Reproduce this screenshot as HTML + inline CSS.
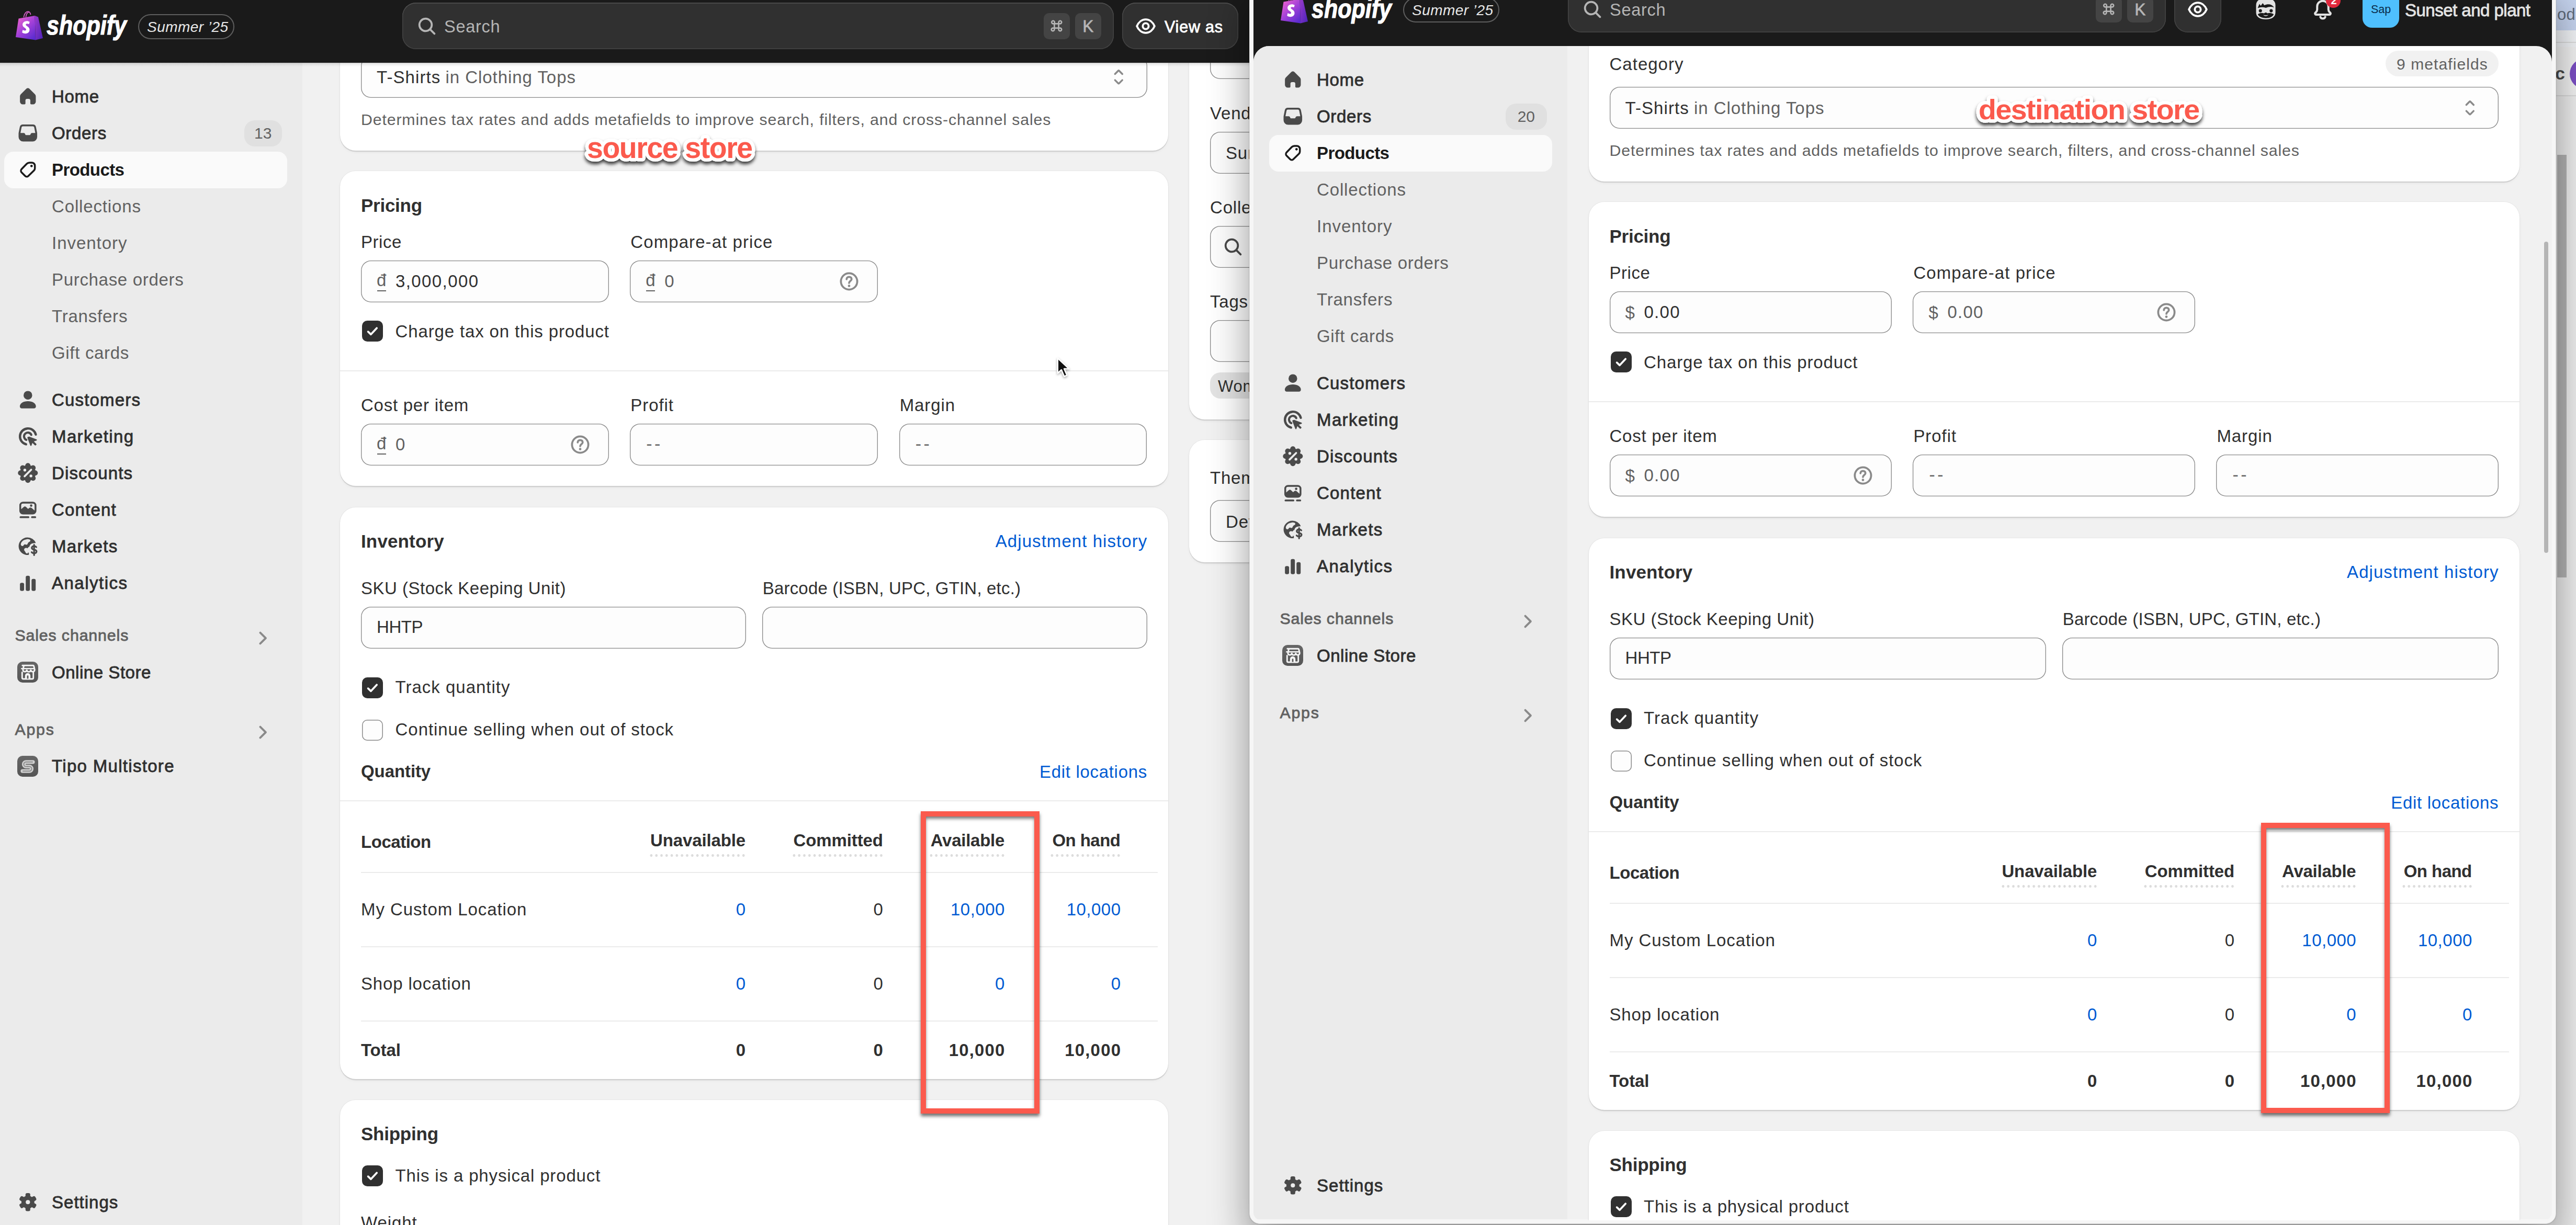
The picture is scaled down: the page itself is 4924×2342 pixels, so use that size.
<!DOCTYPE html><html><head><meta charset="utf-8"><title>Shopify admin</title><style>
*{margin:0;padding:0;box-sizing:content-box}
html,body{width:4924px;height:2342px;overflow:hidden;background:#f1f1f1}
body{font-family:"Liberation Sans",sans-serif;position:relative}
#root{position:absolute;left:0;top:0;width:4924px;height:2342px;overflow:hidden}
#root div,#root span,#root svg{position:absolute}
.t{white-space:pre}
.card{background:#fff;border-radius:30px;box-shadow:0 2.5px 0 0 rgba(0,0,0,.09),0 0 0 1px rgba(0,0,0,.04),0 3px 6px rgba(0,0,0,.04)}
.fld{background:#fdfdfd;box-shadow:inset 0 0 0 1.35px #8a8a8a;border-radius:19px}
.cb{width:40px;height:40px;border-radius:10px;box-sizing:border-box;box-shadow:inset 0 0 0 1.5px #8a8a8a;background:#fdfdfd}
.cb.on{background:#303030;box-shadow:none}
.cb svg{left:0;top:0}
.srch{background:#303030;border-radius:26px;box-shadow:inset 0 1.5px 0 #505050,inset 0 0 0 1.5px #444}
.dots{height:5px;background-image:radial-gradient(circle,#dcdcdc 2.2px,transparent 2.7px);background-size:9.8px 5px;background-repeat:repeat-x}
.appic{width:40px;height:40px;border-radius:10px;background:linear-gradient(180deg,#666,#555);overflow:hidden}
.appic svg{left:0;top:0}
</style></head><body><div id="root"><div style="left:0.0px;top:0.0px;width:2400.0px;height:2342.0px;background:#f1f1f1;"></div>
<div class="card" style="left:650.0px;top:-200.0px;width:1583.0px;height:488.0px;"></div>
<div class="fld" style="left:690.0px;top:107.0px;width:1502.5px;height:79.8px;"></div>
<span class="t" style="top:131.0px;font-size:33px;line-height:33px;color:#303030;letter-spacing:1.09px;left:720.0px;">T-Shirts</span>
<span class="t" style="top:131.0px;font-size:33px;line-height:33px;color:#616161;letter-spacing:0.95px;left:851.5px;">in Clothing Tops</span>
<svg class="ic" viewBox="0 0 20 20" width="46.6" height="46.6" style="left:2114.7px;top:124.2px;color:#8a8a8a;" fill="#8a8a8a"><path d="M10.884 4.323a1.250 1.250 0 0 0-1.768 0l-2.646 2.647a.75.75 0 0 0 1.060 1.060l2.470-2.470 2.470 2.470a.75.75 0 1 0 1.060-1.060l-2.646-2.647Z"/><path d="m13.530 13.030-2.646 2.647a1.250 1.250 0 0 1-1.768 0l-2.646-2.647a.75.75 0 0 1 1.060-1.060l2.470 2.470 2.470-2.470a.75.75 0 0 1 1.060 1.060Z"/></svg>
<span class="t" style="top:214.1px;font-size:30.3px;line-height:30.3px;color:#616161;letter-spacing:0.85px;left:690.0px;">Determines tax rates and adds metafields to improve search, filters, and cross-channel sales</span>
<div class="card" style="left:650.0px;top:327.0px;width:1583.0px;height:602.0px;"></div>
<span class="t" style="top:374.5px;font-size:35px;line-height:35px;color:#303030;font-weight:700;letter-spacing:-0.27px;left:690.0px;">Pricing</span>
<span class="t" style="top:445.8px;font-size:33px;line-height:33px;color:#303030;letter-spacing:0.55px;left:690.0px;">Price</span>
<div class="fld" style="left:690.0px;top:498.0px;width:473.8px;height:79.8px;"></div>
<span class="t" style="top:445.8px;font-size:33px;line-height:33px;color:#303030;letter-spacing:1.08px;left:1205.3px;">Compare-at price</span>
<div class="fld" style="left:1204.3px;top:498.0px;width:473.8px;height:79.8px;"></div>
<span class="t" style="top:519.3px;font-size:33px;line-height:33px;color:#616161;letter-spacing:0.80px;left:720.0px;">đ</span>
<div style="left:720.5px;top:554.5px;width:17.0px;height:2.5px;background:#616161;"></div>
<span class="t" style="top:520.8px;font-size:33px;line-height:33px;color:#303030;letter-spacing:1.40px;left:756.0px;">3,000,000</span>
<span class="t" style="top:519.3px;font-size:33px;line-height:33px;color:#616161;letter-spacing:0.80px;left:1234.3px;">đ</span>
<div style="left:1234.8px;top:554.5px;width:17.0px;height:2.5px;background:#616161;"></div>
<span class="t" style="top:520.8px;font-size:33px;line-height:33px;color:#616161;letter-spacing:0.80px;left:1270.3px;">0</span>
<svg class="ic" viewBox="0 0 20 20" width="50" height="50" style="left:1598.2px;top:513.0px;color:#8a8a8a;" fill="#8a8a8a"><circle cx="10" cy="10" r="6.250" fill="none" stroke="currentColor" stroke-width="1.500"/><path fill="none" stroke="currentColor" stroke-width="1.500" stroke-linecap="round" d="M8.100 8.300c0-1.000.800-1.800 1.900-1.800s1.900.750 1.900 1.750c0 1.400-1.900 1.500-1.900 2.900"/><circle cx="10" cy="13.400" r=".950"/></svg>
<div class="cb on" style="left:692.0px;top:613.0px"><svg viewBox="0 0 40 40" width="40" height="40"><path d="M11.6 21.1l5.4 5.2L28.2 14.3" fill="none" stroke="#fff" stroke-width="3.7" stroke-linecap="round" stroke-linejoin="round"/></svg></div>
<span class="t" style="top:617.1px;font-size:33px;line-height:33px;color:#303030;letter-spacing:0.85px;left:755.6px;">Charge tax on this product</span>
<div style="left:650.0px;top:707.5px;width:1583.0px;height:2.5px;background:#ebebeb;"></div>
<span class="t" style="top:757.8px;font-size:33px;line-height:33px;color:#303030;letter-spacing:0.75px;left:690.0px;">Cost per item</span>
<div class="fld" style="left:690.0px;top:810.0px;width:473.8px;height:79.8px;"></div>
<span class="t" style="top:831.3px;font-size:33px;line-height:33px;color:#616161;letter-spacing:0.80px;left:720.0px;">đ</span>
<div style="left:720.5px;top:866.5px;width:17.0px;height:2.5px;background:#616161;"></div>
<span class="t" style="top:832.8px;font-size:33px;line-height:33px;color:#616161;letter-spacing:0.80px;left:756.0px;">0</span>
<svg class="ic" viewBox="0 0 20 20" width="50" height="50" style="left:1083.8px;top:825.0px;color:#8a8a8a;" fill="#8a8a8a"><circle cx="10" cy="10" r="6.250" fill="none" stroke="currentColor" stroke-width="1.500"/><path fill="none" stroke="currentColor" stroke-width="1.500" stroke-linecap="round" d="M8.100 8.300c0-1.000.800-1.800 1.900-1.800s1.900.750 1.900 1.750c0 1.400-1.900 1.500-1.900 2.900"/><circle cx="10" cy="13.400" r=".950"/></svg>
<span class="t" style="top:757.8px;font-size:33px;line-height:33px;color:#303030;letter-spacing:0.93px;left:1205.3px;">Profit</span>
<div class="fld" style="left:1204.3px;top:810.0px;width:473.8px;height:79.8px;"></div>
<span class="t" style="top:830.8px;font-size:34px;line-height:34px;color:#616161;letter-spacing:4.50px;left:1235.3px;">--</span>
<span class="t" style="top:757.8px;font-size:33px;line-height:33px;color:#303030;letter-spacing:0.91px;left:1719.7px;">Margin</span>
<div class="fld" style="left:1718.7px;top:810.0px;width:473.8px;height:79.8px;"></div>
<span class="t" style="top:830.8px;font-size:34px;line-height:34px;color:#616161;letter-spacing:4.50px;left:1749.7px;">--</span>
<div class="card" style="left:650.0px;top:969.7px;width:1583.0px;height:1093.1px;"></div>
<span class="t" style="top:1016.9px;font-size:35px;line-height:35px;color:#303030;font-weight:700;letter-spacing:0.14px;left:690.0px;">Inventory</span>
<span class="t" style="top:1017.8px;font-size:33px;line-height:33px;color:#005bd3;letter-spacing:1.06px;right:2730.7px;">Adjustment history</span>
<span class="t" style="top:1108.2px;font-size:33px;line-height:33px;color:#303030;letter-spacing:0.51px;left:690.0px;">SKU (Stock Keeping Unit)</span>
<div class="fld" style="left:690.0px;top:1160.0px;width:735.8px;height:79.8px;"></div>
<span class="t" style="top:1181.8px;font-size:33px;line-height:33px;color:#303030;letter-spacing:-0.45px;left:720.0px;">HHTP</span>
<span class="t" style="top:1107.9px;font-size:33px;line-height:33px;color:#303030;letter-spacing:0.18px;left:1457.8px;">Barcode (ISBN, UPC, GTIN, etc.)</span>
<div class="fld" style="left:1456.8px;top:1160.0px;width:735.8px;height:79.8px;"></div>
<div class="cb on" style="left:692.0px;top:1295.0px"><svg viewBox="0 0 40 40" width="40" height="40"><path d="M11.6 21.1l5.4 5.2L28.2 14.3" fill="none" stroke="#fff" stroke-width="3.7" stroke-linecap="round" stroke-linejoin="round"/></svg></div>
<span class="t" style="top:1297.3px;font-size:33px;line-height:33px;color:#303030;letter-spacing:0.99px;left:755.6px;">Track quantity</span>
<div class="cb" style="left:692.0px;top:1375.5px"></div>
<span class="t" style="top:1377.6px;font-size:33px;line-height:33px;color:#303030;letter-spacing:0.93px;left:755.6px;">Continue selling when out of stock</span>
<span class="t" style="top:1457.6px;font-size:33px;line-height:33px;color:#303030;font-weight:700;letter-spacing:-0.09px;left:690.0px;">Quantity</span>
<span class="t" style="top:1458.5px;font-size:33px;line-height:33px;color:#005bd3;letter-spacing:0.69px;right:2731.1px;">Edit locations</span>
<div style="left:650.0px;top:1529.5px;width:1583.0px;height:2.5px;background:#ebebeb;"></div>
<span class="t" style="top:1592.5px;font-size:33px;line-height:33px;color:#303030;font-weight:700;letter-spacing:-0.47px;left:690.0px;">Location</span>
<span class="t" style="top:1590.1px;font-size:33px;line-height:33px;color:#303030;font-weight:700;letter-spacing:-0.14px;right:3499.0px;">Unavailable</span>
<div class="dots" style="left:1240.4px;top:1632.5px;width:186.2px"></div>
<span class="t" style="top:1590.1px;font-size:33px;line-height:33px;color:#303030;font-weight:700;letter-spacing:-0.12px;right:3236.2px;">Committed</span>
<div class="dots" style="left:1513.0px;top:1632.5px;width:176.4px"></div>
<span class="t" style="top:1590.1px;font-size:33px;line-height:33px;color:#303030;font-weight:700;letter-spacing:-0.26px;right:3003.9px;">Available</span>
<div class="dots" style="left:1774.9px;top:1632.5px;width:147.0px"></div>
<span class="t" style="top:1590.1px;font-size:33px;line-height:33px;color:#303030;font-weight:700;letter-spacing:-0.55px;right:2782.6px;">On hand</span>
<div class="dots" style="left:2006.3px;top:1632.5px;width:137.2px"></div>
<div style="left:690.0px;top:1666.5px;width:1522.7px;height:2.5px;background:#ebebeb;"></div>
<div style="left:690.0px;top:1808.5px;width:1522.7px;height:2.5px;background:#ebebeb;"></div>
<div style="left:690.0px;top:1950.5px;width:1522.7px;height:2.5px;background:#ebebeb;"></div>
<span class="t" style="top:1721.6px;font-size:33px;line-height:33px;color:#303030;letter-spacing:0.92px;left:690.0px;">My Custom Location</span>
<span class="t" style="top:1721.8px;font-size:33px;line-height:33px;color:#005bd3;letter-spacing:0.80px;right:3498.1px;">0</span>
<span class="t" style="top:1721.8px;font-size:33px;line-height:33px;color:#303030;letter-spacing:0.80px;right:3235.3px;">0</span>
<span class="t" style="top:1721.8px;font-size:33px;line-height:33px;color:#005bd3;letter-spacing:0.49px;right:3003.1px;">10,000</span>
<span class="t" style="top:1721.8px;font-size:33px;line-height:33px;color:#005bd3;letter-spacing:0.49px;right:2781.5px;">10,000</span>
<span class="t" style="top:1864.2px;font-size:33px;line-height:33px;color:#303030;letter-spacing:0.83px;left:690.0px;">Shop location</span>
<span class="t" style="top:1864.4px;font-size:33px;line-height:33px;color:#005bd3;letter-spacing:0.80px;right:3498.1px;">0</span>
<span class="t" style="top:1864.4px;font-size:33px;line-height:33px;color:#303030;letter-spacing:0.80px;right:3235.3px;">0</span>
<span class="t" style="top:1864.4px;font-size:33px;line-height:33px;color:#005bd3;letter-spacing:0.80px;right:3002.8px;">0</span>
<span class="t" style="top:1864.4px;font-size:33px;line-height:33px;color:#005bd3;letter-spacing:0.80px;right:2781.2px;">0</span>
<span class="t" style="top:1991.0px;font-size:33px;line-height:33px;color:#303030;font-weight:700;letter-spacing:-0.10px;left:690.0px;">Total</span>
<span class="t" style="top:1991.2px;font-size:33px;line-height:33px;color:#303030;font-weight:700;letter-spacing:-0.02px;right:3498.9px;">0</span>
<span class="t" style="top:1991.2px;font-size:33px;line-height:33px;color:#303030;font-weight:700;letter-spacing:-0.02px;right:3236.1px;">0</span>
<span class="t" style="top:1991.2px;font-size:33px;line-height:33px;color:#303030;font-weight:700;letter-spacing:1.17px;right:3002.4px;">10,000</span>
<span class="t" style="top:1991.2px;font-size:33px;line-height:33px;color:#303030;font-weight:700;letter-spacing:1.17px;right:2780.8px;">10,000</span>
<div class="card" style="left:650.0px;top:2103.0px;width:1583.0px;height:497.0px;"></div>
<span class="t" style="top:2150.3px;font-size:35px;line-height:35px;color:#303030;font-weight:700;letter-spacing:-0.24px;left:690.0px;">Shipping</span>
<div class="cb on" style="left:692.0px;top:2228.0px"><svg viewBox="0 0 40 40" width="40" height="40"><path d="M11.6 21.1l5.4 5.2L28.2 14.3" fill="none" stroke="#fff" stroke-width="3.7" stroke-linecap="round" stroke-linejoin="round"/></svg></div>
<span class="t" style="top:2231.2px;font-size:33px;line-height:33px;color:#303030;letter-spacing:0.85px;left:755.6px;">This is a physical product</span>
<span class="t" style="top:2321.4px;font-size:33px;line-height:33px;color:#303030;letter-spacing:0.93px;left:690.0px;">Weight</span>
<div class="card" style="left:2272.5px;top:-100.0px;width:427.5px;height:901.8px;"></div>
<div class="fld" style="left:2313.0px;top:71.0px;width:387.0px;height:79.8px;"></div>
<span class="t" style="top:200.3px;font-size:33px;line-height:33px;color:#303030;letter-spacing:0.80px;left:2313.0px;">Vendor</span>
<div class="fld" style="left:2313.0px;top:252.0px;width:387.0px;height:79.8px;"></div>
<span class="t" style="top:276.3px;font-size:33px;line-height:33px;color:#303030;letter-spacing:0.80px;left:2343.0px;">Sunset and plant</span>
<span class="t" style="top:380.0px;font-size:33px;line-height:33px;color:#303030;letter-spacing:0.80px;left:2313.0px;">Collections</span>
<div class="fld" style="left:2313.0px;top:432.0px;width:387.0px;height:79.8px;"></div>
<svg class="ic" viewBox="0 0 20 20" width="50" height="50" style="left:2332.0px;top:447.0px;color:#4a4a4a;" fill="#4a4a4a"><path fill-rule="evenodd" d="M12.323 13.383a5.500 5.500 0 1 1 1.060-1.060l2.897 2.897a.75.75 0 1 1-1.060 1.060l-2.897-2.897Zm.677-4.383a4 4 0 1 1-8 0 4 4 0 0 1 8 0Z"/></svg>
<span class="t" style="top:560.3px;font-size:33px;line-height:33px;color:#303030;letter-spacing:0.80px;left:2313.0px;">Tags</span>
<div class="fld" style="left:2313.0px;top:612.0px;width:387.0px;height:79.8px;"></div>
<div style="left:2313.0px;top:712.0px;width:387.0px;height:49.6px;background:#e3e3e3;border-radius:20px;"></div>
<span class="t" style="top:722.8px;font-size:31px;line-height:31px;color:#303030;letter-spacing:0.75px;left:2328.0px;">Women</span>
<div class="card" style="left:2272.5px;top:841.4px;width:427.5px;height:234.1px;"></div>
<span class="t" style="top:896.8px;font-size:33px;line-height:33px;color:#303030;letter-spacing:0.80px;left:2313.0px;">Theme template</span>
<div class="fld" style="left:2313.0px;top:956.0px;width:387.0px;height:79.8px;"></div>
<span class="t" style="top:980.8px;font-size:33px;line-height:33px;color:#303030;letter-spacing:0.80px;left:2343.0px;">Default product</span>
<div style="left:0.0px;top:120.0px;width:578.0px;height:2222.0px;background:#ebebeb;"></div>
<div style="left:8.0px;top:290.0px;width:541.0px;height:70.0px;background:#fafafa;border-radius:18px;"></div>
<svg class="ic" viewBox="0 0 20 20" width="46.6" height="46.6" style="left:29.7px;top:161.2px;color:#4a4a4a;" fill="#4a4a4a"><path d="M10 3.2c.5 0 .97.2 1.32.55l4.4 4.4c.5.5.78 1.17.78 1.87v4.23a2.25 2.25 0 0 1-2.25 2.25h-1.5a.75.75 0 0 1-.75-.75v-2.5c0-.69-.56-1.25-1.25-1.25h-1.5c-.69 0-1.25.56-1.25 1.25v2.5a.75.75 0 0 1-.75.75h-1.5a2.25 2.25 0 0 1-2.25-2.25v-4.23c0-.7.28-1.38.78-1.87l4.4-4.4c.35-.35.82-.55 1.32-.55Z"/></svg>
<span class="t" style="top:167.6px;font-size:33px;line-height:33px;color:#303030;-webkit-text-stroke:0.85px currentColor;letter-spacing:0.66px;left:99.0px;">Home</span>
<svg class="ic" viewBox="0 0 20 20" width="46.6" height="46.6" style="left:29.7px;top:231.2px;color:#4a4a4a;" fill="#4a4a4a"><path fill-rule="evenodd" d="M5.9 3h8.2a2.6 2.6 0 0 1 2.55 2.1l.9 4.6c.05.3.08.6.08.9v2.650a3.75 3.75 0 0 1-3.75 3.75h-7.760a3.75 3.75 0 0 1-3.75-3.75v-2.650c0-.3.030-.6.080-.9l.9-4.6a2.600 2.600 0 0 1 2.550-2.100Zm0 1.500a1.100 1.100 0 0 0-1.080.890l-.9 4.610h2.600c.620 0 1.160.420 1.300 1.030.1.4.450.670.860.670h2.640c.410 0 .770-.280.860-.670.140-.6.680-1.030 1.300-1.030h2.600l-.9-4.610a1.100 1.100 0 0 0-1.080-.890h-8.200Z"/></svg>
<span class="t" style="top:237.6px;font-size:33px;line-height:33px;color:#303030;-webkit-text-stroke:0.85px currentColor;letter-spacing:0.67px;left:99.0px;">Orders</span>
<svg class="ic" viewBox="0 0 20 20" width="46.6" height="46.6" style="left:29.7px;top:301.2px;color:#1a1a1a;" fill="#1a1a1a"><path d="M13 8a1 1 0 1 0 0-2 1 1 0 0 0 0 2Z"/><path fill-rule="evenodd" d="M11.276 3.5a3.75 3.75 0 0 0-2.701 1.149l-4.254 4.417a2.75 2.75 0 0 0 .036 3.852l2.898 2.898a2.5 2.5 0 0 0 3.502.033l4.747-4.571a3.25 3.25 0 0 0 .996-2.341v-2.187a3.25 3.25 0 0 0-3.25-3.25h-1.974Zm-1.62 2.19a2.25 2.25 0 0 1 1.62-.69h1.974c.966 0 1.75.784 1.75 1.75v2.187c0 .475-.194.93-.536 1.26l-4.747 4.572a1 1 0 0 1-1.401-.014l-2.898-2.898a1.250 1.250 0 0 1-.016-1.75l4.253-4.418Z"/></svg>
<span class="t" style="top:307.6px;font-size:33px;line-height:33px;color:#1a1a1a;font-weight:700;letter-spacing:-0.58px;left:99.0px;">Products</span>
<div style="left:466.7px;top:230.0px;width:72.0px;height:49.6px;background:#e0e0e0;border-radius:20px;"></div>
<span class="t" style="top:239.8px;font-size:30px;line-height:30px;color:#616161;left:486.0px;">13</span>
<span class="t" style="top:377.6px;font-size:33px;line-height:33px;color:#616161;letter-spacing:0.85px;left:99.0px;">Collections</span>
<span class="t" style="top:447.6px;font-size:33px;line-height:33px;color:#616161;letter-spacing:0.96px;left:99.0px;">Inventory</span>
<span class="t" style="top:517.6px;font-size:33px;line-height:33px;color:#616161;letter-spacing:0.68px;left:99.0px;">Purchase orders</span>
<span class="t" style="top:587.6px;font-size:33px;line-height:33px;color:#616161;letter-spacing:0.78px;left:99.0px;">Transfers</span>
<span class="t" style="top:657.6px;font-size:33px;line-height:33px;color:#616161;letter-spacing:0.68px;left:99.0px;">Gift cards</span>
<svg class="ic" viewBox="0 0 20 20" width="46.6" height="46.6" style="left:29.7px;top:741.2px;color:#4a4a4a;" fill="#4a4a4a"><circle cx="10" cy="6.300" r="3.550"/><path d="M3.400 15.500c0-2.600 2.900-4.300 6.600-4.300s6.600 1.700 6.600 4.300c0 .900-.700 1.600-1.600 1.600h-10c-.900 0-1.600-.700-1.600-1.600Z"/></svg>
<span class="t" style="top:747.6px;font-size:33px;line-height:33px;color:#303030;-webkit-text-stroke:0.85px currentColor;letter-spacing:1.17px;left:99.0px;">Customers</span>
<svg class="ic" viewBox="0 0 20 20" width="46.6" height="46.6" style="left:29.7px;top:811.2px;color:#4a4a4a;" fill="#4a4a4a"><path fill="none" stroke="currentColor" stroke-width="1.9" stroke-linecap="round" d="M16.5 8.5A6.6 6.6 0 1 0 8.5 16.500"/><path fill="none" stroke="currentColor" stroke-width="1.8" stroke-linecap="round" d="M12.8 8.700A3.100 3.100 0 1 0 8.700 12.800"/><path d="M10.9 10.1l6.2 2.35c.45.17.43.8-.02.950l-2.2.72 2.0 2.0a.6.6 0 0 1 0 .85l-.35.35a.6.6 0 0 1-.85 0l-2.0-2.0-.72 2.2c-.15.45-.78.470-.95.020l-2.350-6.2a.75.75 0 0 1 .97-.97Z"/></svg>
<span class="t" style="top:817.6px;font-size:33px;line-height:33px;color:#303030;-webkit-text-stroke:0.85px currentColor;letter-spacing:1.39px;left:99.0px;">Marketing</span>
<svg class="ic" viewBox="0 0 20 20" width="46.6" height="46.6" style="left:29.7px;top:881.2px;color:#4a4a4a;" fill="#4a4a4a"><circle cx="10" cy="10" r="6.500"/><circle cx="10.00" cy="4.00" r="2.150"/><circle cx="14.24" cy="5.76" r="2.150"/><circle cx="16.00" cy="10.00" r="2.150"/><circle cx="14.24" cy="14.24" r="2.150"/><circle cx="10.00" cy="16.00" r="2.150"/><circle cx="5.76" cy="14.24" r="2.150"/><circle cx="4.00" cy="10.00" r="2.150"/><circle cx="5.76" cy="5.76" r="2.150"/><path d="M7.300 12.700l5.400-5.400" stroke="#ebebeb" stroke-width="1.600" stroke-linecap="round"/><circle cx="7.500" cy="7.600" r="1.150" fill="#ebebeb"/><circle cx="12.500" cy="12.400" r="1.150" fill="#ebebeb"/></svg>
<span class="t" style="top:887.6px;font-size:33px;line-height:33px;color:#303030;-webkit-text-stroke:0.85px currentColor;letter-spacing:1.14px;left:99.0px;">Discounts</span>
<svg class="ic" viewBox="0 0 20 20" width="46.6" height="46.6" style="left:29.7px;top:951.2px;color:#4a4a4a;" fill="#4a4a4a"><path fill-rule="evenodd" d="M3 6.500a3 3 0 0 1 3-3h8a3 3 0 0 1 3 3v4.500a3 3 0 0 1-3 3h-8a3 3 0 0 1-3-3v-4.5Zm3-1.500a1.5 1.5 0 0 0-1.5 1.5v3.2l2.100-1.900a1.400 1.400 0 0 1 1.900 0l1.700 1.600 1.000-.8a1.400 1.400 0 0 1 1.800 0l2.500 2.100v-4.200a1.5 1.5 0 0 0-1.5-1.5h-8Zm6.700 2.700a1 1 0 1 0 0-2 1 1 0 0 0 0 2Z"/><rect x="3.200" y="15.400" width="8" height="1.600" rx=".8"/><rect x="12.600" y="15.400" width="4.200" height="1.600" rx=".8"/></svg>
<span class="t" style="top:957.6px;font-size:33px;line-height:33px;color:#303030;-webkit-text-stroke:0.85px currentColor;letter-spacing:1.20px;left:99.0px;">Content</span>
<svg class="ic" viewBox="0 0 20 20" width="46.6" height="46.6" style="left:29.7px;top:1021.2px;color:#4a4a4a;" fill="#4a4a4a"><path d="M9.600 2.800a7.200 7.200 0 1 0 1.200 14.300v-1.600a2.900 2.900 0 0 1 .5-5.200c.2-1.400 1.300-2.500 2.800-2.700l2.400-.300A7.200 7.200 0 0 0 9.600 2.800Z"/><path fill="#ebebeb" d="M9.100 4.300c1.100-.3 2.600.1 2.900.9.300.8-.8 1.200-1.500 1.700-.7.5-.5 1.500-1.300 1.800-.8.3-1.200-.400-1.900-.2-.7.2-.7 1.100-1.400 1.300-.7.2-1.600-.3-1.700-1.100-.1-.9.500-2.200 1.600-3.100 1.000-.800 2.200-1.100 3.300-1.300Z"/><path fill="#ebebeb" d="M8.300 11.400c.8-.2 1.700.2 2.000 1.000.3.800-.1 1.500-.1 2.300 0 .7-.2 1.300-.9 1.300s-1.100-.6-1.400-1.300c-.3-.700-1.100-1.100-1.000-1.900.1-.8.600-1.200 1.400-1.400Z"/><path fill="none" stroke="currentColor" stroke-width="1.400" stroke-linecap="round" d="M16.900 10.700c-.4-.5-1.000-.8-1.800-.8-1.100 0-1.900.600-1.900 1.500 0 2.000 3.900.9 3.900 2.900 0 .9-.8 1.500-2.000 1.500-.900 0-1.600-.3-2.000-.9M15.100 8.900v8.400"/></svg>
<span class="t" style="top:1027.6px;font-size:33px;line-height:33px;color:#303030;-webkit-text-stroke:0.85px currentColor;letter-spacing:1.32px;left:99.0px;">Markets</span>
<svg class="ic" viewBox="0 0 20 20" width="46.6" height="46.6" style="left:29.7px;top:1091.2px;color:#4a4a4a;" fill="#4a4a4a"><rect x="3.500" y="10" width="3.400" height="6.650" rx="1.300"/><rect x="8.250" y="4.150" width="3.400" height="12.500" rx="1.300"/><rect x="13.000" y="6.800" width="3.400" height="9.850" rx="1.300"/></svg>
<span class="t" style="top:1097.6px;font-size:33px;line-height:33px;color:#303030;-webkit-text-stroke:0.85px currentColor;letter-spacing:1.49px;left:99.0px;">Analytics</span>
<span class="t" style="top:1199.9px;font-size:30.3px;line-height:30.3px;color:#616161;-webkit-text-stroke:0.85px currentColor;letter-spacing:0.88px;left:28.4px;">Sales channels</span>
<svg class="ic" viewBox="0 0 20 20" width="52" height="52" style="left:475.5px;top:1194.0px;color:#8a8a8a;" fill="#8a8a8a"><path fill-rule="evenodd" d="M7.720 14.530a.75.75 0 0 1 0-1.060l3.470-3.470-3.470-3.470a.75.75 0 0 1 1.060-1.060l4 4a.75.75 0 0 1 0 1.060l-4 4a.75.75 0 0 1-1.060 0Z"/></svg>
<div class="appic" style="left:33.0px;top:1265.0px"><svg viewBox="0 0 40 40" width="40" height="40"><g fill="none" stroke="#f4f4f4" stroke-width="2.9" stroke-linejoin="round" stroke-linecap="round"><path d="M9.300 20.500v10.200a2.300 2.300 0 0 0 2.300 2.300h16.800a2.300 2.300 0 0 0 2.300-2.300v-10.200"/><path d="M9.800 7.300h20.400a1.500 1.500 0 0 1 1.450 1.100l1.650 6.900a3.800 3.800 0 0 1-7.500.900 3.800 3.800 0 0 1-7.500 0 3.800 3.800 0 0 1-7.500-.900l1.650-6.900a1.500 1.500 0 0 1 1.350-1.100Z"/><path d="M8.300 13.200h23.400" stroke-width="2.400"/><path d="M15.900 32.500v-5.500a4.100 4.100 0 0 1 8.200 0v5.500" fill="#f4f4f4" stroke-width="2.200"/><path d="M18.600 32.500v-4.800a1.400 1.400 0 0 1 2.800 0v4.800" fill="#5a5a5a" stroke="none"/></g></svg></div>
<span class="t" style="top:1268.6px;font-size:33px;line-height:33px;color:#303030;-webkit-text-stroke:0.85px currentColor;letter-spacing:0.54px;left:99.0px;">Online Store</span>
<span class="t" style="top:1379.9px;font-size:30.3px;line-height:30.3px;color:#616161;-webkit-text-stroke:0.85px currentColor;letter-spacing:1.78px;left:28.4px;">Apps</span>
<svg class="ic" viewBox="0 0 20 20" width="52" height="52" style="left:475.5px;top:1374.0px;color:#8a8a8a;" fill="#8a8a8a"><path fill-rule="evenodd" d="M7.720 14.530a.75.75 0 0 1 0-1.060l3.470-3.470-3.470-3.470a.75.75 0 0 1 1.060-1.060l4 4a.75.75 0 0 1 0 1.060l-4 4a.75.75 0 0 1-1.060 0Z"/></svg>
<div class="appic" style="left:33.0px;top:1444.5px"><svg viewBox="0 0 40 40" width="40" height="40"><g fill="none" stroke-linecap="round" stroke-linejoin="round"><path d="M30 11.800h-13.200a4.350 4.350 0 0 0 0 8.700h6.400a4.350 4.350 0 0 1 0 8.700h-13.200" stroke="#cfcfcf" stroke-width="7.200"/><path d="M29 11.800h-12.200a4.350 4.350 0 0 0 0 8.700h4" stroke="#8f8f8f" stroke-width="2.000"/><path d="M11 29.200h12.200a4.350 4.350 0 0 0 0-8.700h-4" stroke="#8f8f8f" stroke-width="2.000"/></g></svg></div>
<span class="t" style="top:1448.1px;font-size:33px;line-height:33px;color:#303030;-webkit-text-stroke:0.85px currentColor;letter-spacing:1.31px;left:99.0px;">Tipo Multistore</span>
<svg class="ic" viewBox="0 0 20 20" width="46.6" height="46.6" style="left:29.7px;top:2274.7px;color:#4a4a4a;" fill="#4a4a4a"><rect x="8.050" y="2.600" width="3.900" height="5" rx="1.300" transform="rotate(0 10 10)"/><rect x="8.050" y="2.600" width="3.900" height="5" rx="1.300" transform="rotate(60 10 10)"/><rect x="8.050" y="2.600" width="3.900" height="5" rx="1.300" transform="rotate(120 10 10)"/><rect x="8.050" y="2.600" width="3.900" height="5" rx="1.300" transform="rotate(180 10 10)"/><rect x="8.050" y="2.600" width="3.900" height="5" rx="1.300" transform="rotate(240 10 10)"/><rect x="8.050" y="2.600" width="3.900" height="5" rx="1.300" transform="rotate(300 10 10)"/><circle cx="10" cy="10" r="5.300"/><circle cx="10" cy="10" r="1.750" fill="#ebebeb"/></svg>
<span class="t" style="top:2281.6px;font-size:33px;line-height:33px;color:#303030;-webkit-text-stroke:0.85px currentColor;letter-spacing:1.01px;left:99.0px;">Settings</span>
<div style="left:0.0px;top:0.0px;width:2388.0px;height:120.0px;background:#1a1a1a;"></div>
<svg class="ic" viewBox="0 0 52 58" width="52" height="58" style="left:30.0px;top:20.0px"><defs><linearGradient id="bg1" x1="0.150" y1="0.100" x2="0.850" y2="1"><stop offset="0" stop-color="#e860cf"/><stop offset=".450" stop-color="#a541d8"/><stop offset="1" stop-color="#5a2bd0"/></linearGradient><linearGradient id="bg2" x1="0" y1="0" x2="1" y2="1"><stop offset="0" stop-color="#9a3ccb"/><stop offset="1" stop-color="#4b22b8"/></linearGradient></defs><path d="M15.500 12.500c.8-6 4.200-10.500 8-10.500 2.500 0 4.200 2.300 5 5.500M19.500 12c.7-4.500 2.700-8 5.200-8.800" fill="none" stroke="#e062d2" stroke-width="1.700" stroke-linecap="round"/><path d="M5.500 15.500l31-5.500 1.500 46.500-38 -5.500Z" fill="url(#bg1)"/><path d="M36.500 10l6.500 2.500 9 40.500-14 3.500Z" fill="url(#bg2)"/><path d="M26.800 21.800c-1.700-1.000-3.700-1.600-5.700-1.500-4.900.200-8.200 3.200-8 7.300.300 5.200 6.800 5.800 6.900 9 .050 1.100-.750 1.900-2.100 1.950-2.100.100-4.400-1.500-4.400-1.500l-1.300 4.900s2.400 2.300 6.500 2.200c4.800-.150 8-3.100 7.800-7.700-.300-5.800-7.100-6.500-7.200-9.200-.050-1.300 1.000-1.900 2.400-1.950 1.900-.050 3.700.800 3.700.800l1.400-4.300Z" fill="#fff"/></svg>
<svg class="ic" width="170" height="70" style="left:86.0px;top:18.0px;overflow:visible"><text x="3" y="48.3" font-family="Liberation Sans, sans-serif" font-weight="700" font-style="italic" font-size="52" textLength="153" lengthAdjust="spacingAndGlyphs" fill="#fff" stroke="#fff" stroke-width="1.2">shopify</text></svg>
<div style="left:264.0px;top:27.0px;width:184.0px;height:47.5px;border-radius:24px;border:2px solid #5e5e5e;box-sizing:border-box;"></div>
<span class="t" style="top:38.2px;font-size:28px;line-height:28px;color:#e8e8e8;font-style:italic;letter-spacing:0.45px;left:281.0px;">Summer ’25</span>
<div class="srch" style="left:769.0px;top:5.0px;width:1360.0px;height:89.0px;"></div>
<svg class="ic" viewBox="0 0 20 20" width="50" height="50" style="left:790.5px;top:25.0px;color:#b5b5b5;" fill="#b5b5b5"><path fill-rule="evenodd" d="M12.323 13.383a5.500 5.500 0 1 1 1.060-1.060l2.897 2.897a.75.75 0 1 1-1.060 1.060l-2.897-2.897Zm.677-4.383a4 4 0 1 1-8 0 4 4 0 0 1 8 0Z"/></svg>
<span class="t" style="top:34.5px;font-size:32.5px;line-height:32.5px;color:#b5b5b5;letter-spacing:0.70px;left:849.0px;">Search</span>
<div style="left:1995.0px;top:25.0px;width:49.5px;height:49.5px;background:#444444;border-radius:10px;"></div>
<svg class="ic" viewBox="0 0 20 20" width="33" height="33" style="left:2003.3px;top:33.3px" fill="none" stroke="#b5b5b5" stroke-width="1.6"><path d="M7.500 7.500h5v5h-5zM7.500 7.500h-1.400a1.700 1.700 0 1 1 1.700-1.700l-.3 1.700ZM12.500 7.500v-1.700a1.700 1.700 0 1 1 1.700 1.700h-1.700ZM12.500 12.500h1.700a1.700 1.700 0 1 1-1.700 1.700v-1.700ZM7.500 12.500v1.700a1.700 1.700 0 1 1-1.700-1.700h1.700Z" stroke-linejoin="round"/></svg>
<div style="left:2055.0px;top:25.0px;width:49.5px;height:49.5px;background:#444444;border-radius:10px;"></div>
<span class="t" style="top:35.0px;font-size:31px;line-height:31px;color:#b5b5b5;-webkit-text-stroke:0.85px currentColor;left:2069.4px;">K</span>
<div class="srch" style="left:2145.0px;top:5.0px;width:222.0px;height:89.0px;"></div>
<svg class="ic" viewBox="0 0 20 20" width="50" height="50" style="left:2165.0px;top:25.0px;color:#fff;" fill="#fff"><path fill="none" stroke="currentColor" stroke-width="1.550" stroke-linejoin="round" d="M3.250 10c1.300-3.100 3.800-5.150 6.750-5.150s5.450 2.050 6.750 5.150c-1.300 3.100-3.800 5.150-6.750 5.150s-5.450-2.050-6.750-5.150Z"/><circle cx="10" cy="10" r="2.250" fill="none" stroke="currentColor" stroke-width="1.550"/></svg>
<span class="t" style="top:36.0px;font-size:30.5px;line-height:30.5px;color:#fff;-webkit-text-stroke:0.85px currentColor;letter-spacing:0.79px;left:2226.0px;">View as</span>
<div style="left:0.0px;top:120.0px;width:2388.0px;height:8.0px;background:linear-gradient(180deg,rgba(0,0,0,.16),rgba(0,0,0,.05) 45%,rgba(0,0,0,0));"></div>
<div style="left:4880.0px;top:0.0px;width:44.0px;height:2342.0px;background:#ededed;"></div>
<div style="left:4886.0px;top:0.0px;width:38.0px;height:58.0px;background:#c6d4ef;"></div>
<span class="t" style="top:11.8px;font-size:31px;line-height:31px;color:#5f6b7a;letter-spacing:0.30px;left:4888.0px;">oda</span>
<div style="left:4886.0px;top:58.0px;width:38.0px;height:32.0px;background:#f1f3f6;"></div>
<div style="left:4886.0px;top:80.0px;width:38.0px;height:2.0px;background:#dcdcdc;"></div>
<div style="left:4886.0px;top:90.0px;width:38.0px;height:93.0px;background:#f1f1f1;"></div>
<div style="left:4886.0px;top:182.0px;width:38.0px;height:2.0px;background:#d9d9d9;"></div>
<div style="left:4912.0px;top:112.0px;width:58.0px;height:58.0px;background:#7b4fc4;border-radius:29px;"></div>
<span class="t" style="top:123.3px;font-size:34px;line-height:34px;color:#4a4a4a;font-weight:700;letter-spacing:-0.03px;left:4884.0px;">c</span>
<div style="left:4888.0px;top:296.0px;width:18.0px;height:808.0px;background:#b3b3b3;"></div>
<div style="left:2388.0px;top:-40.0px;width:2498.0px;height:2380.0px;background:#f6f6f6;border-radius:20px;border:1px solid #dcdcdc;box-sizing:border-box;box-shadow:0 40px 76px rgba(0,0,0,.40),0 0 2px rgba(0,0,0,.3);"></div>
<div style="left:2396px;top:0;width:2482px;height:2333px;overflow:hidden;border-radius:0 0 15px 15px;">
<div style="left:-2396px;top:0;width:4924px;height:2342px;">
<div style="left:2396.0px;top:0.0px;width:2482.0px;height:140.0px;background:#1a1a1a;"></div>
<div style="left:2396.0px;top:88.0px;width:2482.0px;height:2243.0px;background:#f1f1f1;border-radius:30px 30px 0 0;"></div>
<div class="card" style="left:3036.5px;top:-141.0px;width:1779.8px;height:488.0px;"></div>
<span class="t" style="top:106.2px;font-size:33px;line-height:33px;color:#303030;letter-spacing:1.01px;left:3076.5px;">Category</span>
<div style="left:4560.3px;top:97.0px;width:215.5px;height:49.0px;background:#f1f1f1;border-radius:24.5px;"></div>
<span class="t" style="top:107.7px;font-size:30px;line-height:30px;color:#616161;letter-spacing:1.10px;left:4581.0px;">9 metafields</span>
<div class="fld" style="left:3076.5px;top:166.0px;width:1699.3px;height:79.8px;"></div>
<span class="t" style="top:190.0px;font-size:33px;line-height:33px;color:#303030;letter-spacing:1.09px;left:3106.5px;">T-Shirts</span>
<span class="t" style="top:190.0px;font-size:33px;line-height:33px;color:#616161;letter-spacing:0.95px;left:3238.0px;">in Clothing Tops</span>
<svg class="ic" viewBox="0 0 20 20" width="46.6" height="46.6" style="left:4698.0px;top:183.2px;color:#8a8a8a;" fill="#8a8a8a"><path d="M10.884 4.323a1.250 1.250 0 0 0-1.768 0l-2.646 2.647a.75.75 0 0 0 1.060 1.060l2.470-2.470 2.470 2.470a.75.75 0 1 0 1.060-1.060l-2.646-2.647Z"/><path d="m13.530 13.030-2.646 2.647a1.250 1.250 0 0 1-1.768 0l-2.646-2.647a.75.75 0 0 1 1.060-1.060l2.470 2.470 2.470-2.470a.75.75 0 0 1 1.060 1.060Z"/></svg>
<span class="t" style="top:273.1px;font-size:30.3px;line-height:30.3px;color:#616161;letter-spacing:0.85px;left:3076.5px;">Determines tax rates and adds metafields to improve search, filters, and cross-channel sales</span>
<div class="card" style="left:3036.5px;top:386.0px;width:1779.8px;height:602.0px;"></div>
<span class="t" style="top:433.5px;font-size:35px;line-height:35px;color:#303030;font-weight:700;letter-spacing:-0.27px;left:3076.5px;">Pricing</span>
<span class="t" style="top:504.8px;font-size:33px;line-height:33px;color:#303030;letter-spacing:0.55px;left:3076.5px;">Price</span>
<div class="fld" style="left:3076.5px;top:557.0px;width:539.4px;height:79.8px;"></div>
<span class="t" style="top:504.8px;font-size:33px;line-height:33px;color:#303030;letter-spacing:1.08px;left:3657.4px;">Compare-at price</span>
<div class="fld" style="left:3656.4px;top:557.0px;width:539.4px;height:79.8px;"></div>
<span class="t" style="top:580.8px;font-size:33px;line-height:33px;color:#616161;letter-spacing:0.80px;left:3106.5px;">$</span>
<span class="t" style="top:579.8px;font-size:33px;line-height:33px;color:#303030;letter-spacing:1.26px;left:3142.5px;">0.00</span>
<span class="t" style="top:580.8px;font-size:33px;line-height:33px;color:#616161;letter-spacing:0.80px;left:3686.4px;">$</span>
<span class="t" style="top:579.8px;font-size:33px;line-height:33px;color:#616161;letter-spacing:1.26px;left:3722.4px;">0.00</span>
<svg class="ic" viewBox="0 0 20 20" width="50" height="50" style="left:4115.9px;top:572.0px;color:#8a8a8a;" fill="#8a8a8a"><circle cx="10" cy="10" r="6.250" fill="none" stroke="currentColor" stroke-width="1.500"/><path fill="none" stroke="currentColor" stroke-width="1.500" stroke-linecap="round" d="M8.100 8.300c0-1.000.800-1.800 1.900-1.800s1.900.750 1.900 1.750c0 1.400-1.900 1.500-1.900 2.900"/><circle cx="10" cy="13.400" r=".950"/></svg>
<div class="cb on" style="left:3078.5px;top:672.0px"><svg viewBox="0 0 40 40" width="40" height="40"><path d="M11.6 21.1l5.4 5.2L28.2 14.3" fill="none" stroke="#fff" stroke-width="3.7" stroke-linecap="round" stroke-linejoin="round"/></svg></div>
<span class="t" style="top:676.1px;font-size:33px;line-height:33px;color:#303030;letter-spacing:0.85px;left:3142.1px;">Charge tax on this product</span>
<div style="left:3036.5px;top:766.5px;width:1779.8px;height:2.5px;background:#ebebeb;"></div>
<span class="t" style="top:816.8px;font-size:33px;line-height:33px;color:#303030;letter-spacing:0.75px;left:3076.5px;">Cost per item</span>
<div class="fld" style="left:3076.5px;top:869.0px;width:539.4px;height:79.8px;"></div>
<span class="t" style="top:892.8px;font-size:33px;line-height:33px;color:#616161;letter-spacing:0.80px;left:3106.5px;">$</span>
<span class="t" style="top:891.8px;font-size:33px;line-height:33px;color:#616161;letter-spacing:1.26px;left:3142.5px;">0.00</span>
<svg class="ic" viewBox="0 0 20 20" width="50" height="50" style="left:3535.9px;top:884.0px;color:#8a8a8a;" fill="#8a8a8a"><circle cx="10" cy="10" r="6.250" fill="none" stroke="currentColor" stroke-width="1.500"/><path fill="none" stroke="currentColor" stroke-width="1.500" stroke-linecap="round" d="M8.100 8.300c0-1.000.800-1.800 1.900-1.800s1.900.750 1.900 1.750c0 1.400-1.900 1.500-1.900 2.900"/><circle cx="10" cy="13.400" r=".950"/></svg>
<span class="t" style="top:816.8px;font-size:33px;line-height:33px;color:#303030;letter-spacing:0.93px;left:3657.4px;">Profit</span>
<div class="fld" style="left:3656.4px;top:869.0px;width:539.4px;height:79.8px;"></div>
<span class="t" style="top:889.8px;font-size:34px;line-height:34px;color:#616161;letter-spacing:4.50px;left:3687.4px;">--</span>
<span class="t" style="top:816.8px;font-size:33px;line-height:33px;color:#303030;letter-spacing:0.90px;left:4237.4px;">Margin</span>
<div class="fld" style="left:4236.4px;top:869.0px;width:539.4px;height:79.8px;"></div>
<span class="t" style="top:889.8px;font-size:34px;line-height:34px;color:#616161;letter-spacing:4.50px;left:4267.4px;">--</span>
<div class="card" style="left:3036.5px;top:1028.7px;width:1779.8px;height:1093.1px;"></div>
<span class="t" style="top:1075.9px;font-size:35px;line-height:35px;color:#303030;font-weight:700;letter-spacing:0.14px;left:3076.5px;">Inventory</span>
<span class="t" style="top:1076.8px;font-size:33px;line-height:33px;color:#005bd3;letter-spacing:1.06px;right:147.4px;">Adjustment history</span>
<span class="t" style="top:1167.2px;font-size:33px;line-height:33px;color:#303030;letter-spacing:0.51px;left:3076.5px;">SKU (Stock Keeping Unit)</span>
<div class="fld" style="left:3076.5px;top:1219.0px;width:834.2px;height:79.8px;"></div>
<span class="t" style="top:1240.8px;font-size:33px;line-height:33px;color:#303030;letter-spacing:-0.45px;left:3106.5px;">HHTP</span>
<span class="t" style="top:1166.9px;font-size:33px;line-height:33px;color:#303030;letter-spacing:0.18px;left:3942.7px;">Barcode (ISBN, UPC, GTIN, etc.)</span>
<div class="fld" style="left:3941.7px;top:1219.0px;width:834.2px;height:79.8px;"></div>
<div class="cb on" style="left:3078.5px;top:1354.0px"><svg viewBox="0 0 40 40" width="40" height="40"><path d="M11.6 21.1l5.4 5.2L28.2 14.3" fill="none" stroke="#fff" stroke-width="3.7" stroke-linecap="round" stroke-linejoin="round"/></svg></div>
<span class="t" style="top:1356.3px;font-size:33px;line-height:33px;color:#303030;letter-spacing:0.99px;left:3142.1px;">Track quantity</span>
<div class="cb" style="left:3078.5px;top:1434.5px"></div>
<span class="t" style="top:1436.6px;font-size:33px;line-height:33px;color:#303030;letter-spacing:0.93px;left:3142.1px;">Continue selling when out of stock</span>
<span class="t" style="top:1516.6px;font-size:33px;line-height:33px;color:#303030;font-weight:700;letter-spacing:-0.09px;left:3076.5px;">Quantity</span>
<span class="t" style="top:1517.5px;font-size:33px;line-height:33px;color:#005bd3;letter-spacing:0.69px;right:147.8px;">Edit locations</span>
<div style="left:3036.5px;top:1588.5px;width:1779.8px;height:2.5px;background:#ebebeb;"></div>
<span class="t" style="top:1651.5px;font-size:33px;line-height:33px;color:#303030;font-weight:700;letter-spacing:-0.47px;left:3076.5px;">Location</span>
<span class="t" style="top:1649.1px;font-size:33px;line-height:33px;color:#303030;font-weight:700;letter-spacing:-0.14px;right:915.7px;">Unavailable</span>
<div class="dots" style="left:3823.7px;top:1691.5px;width:186.2px"></div>
<span class="t" style="top:1649.1px;font-size:33px;line-height:33px;color:#303030;font-weight:700;letter-spacing:-0.12px;right:652.9px;">Committed</span>
<div class="dots" style="left:4096.3px;top:1691.5px;width:176.4px"></div>
<span class="t" style="top:1649.1px;font-size:33px;line-height:33px;color:#303030;font-weight:700;letter-spacing:-0.26px;right:420.6px;">Available</span>
<div class="dots" style="left:4358.2px;top:1691.5px;width:147.0px"></div>
<span class="t" style="top:1649.1px;font-size:33px;line-height:33px;color:#303030;font-weight:700;letter-spacing:-0.55px;right:199.3px;">On hand</span>
<div class="dots" style="left:4589.6px;top:1691.5px;width:137.2px"></div>
<div style="left:3076.5px;top:1725.5px;width:1719.5px;height:2.5px;background:#ebebeb;"></div>
<div style="left:3076.5px;top:1867.5px;width:1719.5px;height:2.5px;background:#ebebeb;"></div>
<div style="left:3076.5px;top:2009.5px;width:1719.5px;height:2.5px;background:#ebebeb;"></div>
<span class="t" style="top:1780.6px;font-size:33px;line-height:33px;color:#303030;letter-spacing:0.92px;left:3076.5px;">My Custom Location</span>
<span class="t" style="top:1780.8px;font-size:33px;line-height:33px;color:#005bd3;letter-spacing:0.80px;right:914.8px;">0</span>
<span class="t" style="top:1780.8px;font-size:33px;line-height:33px;color:#303030;letter-spacing:0.80px;right:652.0px;">0</span>
<span class="t" style="top:1780.8px;font-size:33px;line-height:33px;color:#005bd3;letter-spacing:0.49px;right:419.8px;">10,000</span>
<span class="t" style="top:1780.8px;font-size:33px;line-height:33px;color:#005bd3;letter-spacing:0.49px;right:198.2px;">10,000</span>
<span class="t" style="top:1923.2px;font-size:33px;line-height:33px;color:#303030;letter-spacing:0.83px;left:3076.5px;">Shop location</span>
<span class="t" style="top:1923.4px;font-size:33px;line-height:33px;color:#005bd3;letter-spacing:0.80px;right:914.8px;">0</span>
<span class="t" style="top:1923.4px;font-size:33px;line-height:33px;color:#303030;letter-spacing:0.80px;right:652.0px;">0</span>
<span class="t" style="top:1923.4px;font-size:33px;line-height:33px;color:#005bd3;letter-spacing:0.80px;right:419.5px;">0</span>
<span class="t" style="top:1923.4px;font-size:33px;line-height:33px;color:#005bd3;letter-spacing:0.80px;right:197.9px;">0</span>
<span class="t" style="top:2050.0px;font-size:33px;line-height:33px;color:#303030;font-weight:700;letter-spacing:-0.10px;left:3076.5px;">Total</span>
<span class="t" style="top:2050.2px;font-size:33px;line-height:33px;color:#303030;font-weight:700;letter-spacing:-0.02px;right:915.6px;">0</span>
<span class="t" style="top:2050.2px;font-size:33px;line-height:33px;color:#303030;font-weight:700;letter-spacing:-0.02px;right:652.8px;">0</span>
<span class="t" style="top:2050.2px;font-size:33px;line-height:33px;color:#303030;font-weight:700;letter-spacing:1.17px;right:419.1px;">10,000</span>
<span class="t" style="top:2050.2px;font-size:33px;line-height:33px;color:#303030;font-weight:700;letter-spacing:1.17px;right:197.5px;">10,000</span>
<div class="card" style="left:3036.5px;top:2162.0px;width:1779.8px;height:497.0px;"></div>
<span class="t" style="top:2209.3px;font-size:35px;line-height:35px;color:#303030;font-weight:700;letter-spacing:-0.24px;left:3076.5px;">Shipping</span>
<div class="cb on" style="left:3078.5px;top:2287.0px"><svg viewBox="0 0 40 40" width="40" height="40"><path d="M11.6 21.1l5.4 5.2L28.2 14.3" fill="none" stroke="#fff" stroke-width="3.7" stroke-linecap="round" stroke-linejoin="round"/></svg></div>
<span class="t" style="top:2290.2px;font-size:33px;line-height:33px;color:#303030;letter-spacing:0.85px;left:3142.1px;">This is a physical product</span>
<span class="t" style="top:2380.4px;font-size:33px;line-height:33px;color:#303030;letter-spacing:0.94px;left:3076.5px;">Weight</span>
<div style="left:2396.0px;top:88.0px;width:600.0px;height:2243.0px;background:#ebebeb;border-radius:30px 0 0 0;"></div>
<div style="left:2426.0px;top:258.0px;width:541.0px;height:70.0px;background:#fafafa;border-radius:18px;"></div>
<svg class="ic" viewBox="0 0 20 20" width="46.6" height="46.6" style="left:2447.7px;top:129.2px;color:#4a4a4a;" fill="#4a4a4a"><path d="M10 3.2c.5 0 .97.2 1.32.55l4.4 4.4c.5.5.78 1.17.78 1.87v4.23a2.25 2.25 0 0 1-2.25 2.25h-1.5a.75.75 0 0 1-.75-.75v-2.5c0-.69-.56-1.25-1.25-1.25h-1.5c-.69 0-1.25.56-1.25 1.25v2.5a.75.75 0 0 1-.75.75h-1.5a2.25 2.25 0 0 1-2.25-2.25v-4.23c0-.7.28-1.38.78-1.87l4.4-4.4c.35-.35.82-.55 1.32-.55Z"/></svg>
<span class="t" style="top:135.6px;font-size:33px;line-height:33px;color:#303030;-webkit-text-stroke:0.85px currentColor;letter-spacing:0.66px;left:2517.0px;">Home</span>
<svg class="ic" viewBox="0 0 20 20" width="46.6" height="46.6" style="left:2447.7px;top:199.2px;color:#4a4a4a;" fill="#4a4a4a"><path fill-rule="evenodd" d="M5.9 3h8.2a2.6 2.6 0 0 1 2.55 2.1l.9 4.6c.05.3.08.6.08.9v2.650a3.75 3.75 0 0 1-3.75 3.75h-7.760a3.75 3.75 0 0 1-3.75-3.75v-2.650c0-.3.030-.6.080-.9l.9-4.6a2.600 2.600 0 0 1 2.550-2.100Zm0 1.500a1.100 1.100 0 0 0-1.080.890l-.9 4.610h2.600c.620 0 1.160.420 1.300 1.030.1.4.450.670.860.670h2.640c.410 0 .770-.280.860-.670.140-.6.680-1.030 1.300-1.030h2.600l-.9-4.610a1.100 1.100 0 0 0-1.080-.890h-8.200Z"/></svg>
<span class="t" style="top:205.6px;font-size:33px;line-height:33px;color:#303030;-webkit-text-stroke:0.85px currentColor;letter-spacing:0.67px;left:2517.0px;">Orders</span>
<svg class="ic" viewBox="0 0 20 20" width="46.6" height="46.6" style="left:2447.7px;top:269.2px;color:#1a1a1a;" fill="#1a1a1a"><path d="M13 8a1 1 0 1 0 0-2 1 1 0 0 0 0 2Z"/><path fill-rule="evenodd" d="M11.276 3.5a3.75 3.75 0 0 0-2.701 1.149l-4.254 4.417a2.75 2.75 0 0 0 .036 3.852l2.898 2.898a2.5 2.5 0 0 0 3.502.033l4.747-4.571a3.25 3.25 0 0 0 .996-2.341v-2.187a3.25 3.25 0 0 0-3.25-3.25h-1.974Zm-1.62 2.19a2.25 2.25 0 0 1 1.62-.69h1.974c.966 0 1.75.784 1.75 1.75v2.187c0 .475-.194.93-.536 1.26l-4.747 4.572a1 1 0 0 1-1.401-.014l-2.898-2.898a1.250 1.250 0 0 1-.016-1.75l4.253-4.418Z"/></svg>
<span class="t" style="top:275.6px;font-size:33px;line-height:33px;color:#1a1a1a;font-weight:700;letter-spacing:-0.58px;left:2517.0px;">Products</span>
<div style="left:2878.0px;top:198.0px;width:78.7px;height:49.6px;background:#e0e0e0;border-radius:20px;"></div>
<span class="t" style="top:207.8px;font-size:30px;line-height:30px;color:#616161;left:2900.7px;">20</span>
<span class="t" style="top:345.6px;font-size:33px;line-height:33px;color:#616161;letter-spacing:0.85px;left:2517.0px;">Collections</span>
<span class="t" style="top:415.6px;font-size:33px;line-height:33px;color:#616161;letter-spacing:0.96px;left:2517.0px;">Inventory</span>
<span class="t" style="top:485.6px;font-size:33px;line-height:33px;color:#616161;letter-spacing:0.68px;left:2517.0px;">Purchase orders</span>
<span class="t" style="top:555.6px;font-size:33px;line-height:33px;color:#616161;letter-spacing:0.78px;left:2517.0px;">Transfers</span>
<span class="t" style="top:625.6px;font-size:33px;line-height:33px;color:#616161;letter-spacing:0.68px;left:2517.0px;">Gift cards</span>
<svg class="ic" viewBox="0 0 20 20" width="46.6" height="46.6" style="left:2447.7px;top:709.2px;color:#4a4a4a;" fill="#4a4a4a"><circle cx="10" cy="6.300" r="3.550"/><path d="M3.400 15.500c0-2.600 2.900-4.300 6.600-4.300s6.600 1.700 6.600 4.300c0 .900-.700 1.600-1.600 1.600h-10c-.900 0-1.600-.700-1.600-1.600Z"/></svg>
<span class="t" style="top:715.6px;font-size:33px;line-height:33px;color:#303030;-webkit-text-stroke:0.85px currentColor;letter-spacing:1.17px;left:2517.0px;">Customers</span>
<svg class="ic" viewBox="0 0 20 20" width="46.6" height="46.6" style="left:2447.7px;top:779.2px;color:#4a4a4a;" fill="#4a4a4a"><path fill="none" stroke="currentColor" stroke-width="1.9" stroke-linecap="round" d="M16.5 8.5A6.6 6.6 0 1 0 8.5 16.500"/><path fill="none" stroke="currentColor" stroke-width="1.8" stroke-linecap="round" d="M12.8 8.700A3.100 3.100 0 1 0 8.700 12.800"/><path d="M10.9 10.1l6.2 2.35c.45.17.43.8-.02.950l-2.2.72 2.0 2.0a.6.6 0 0 1 0 .85l-.35.35a.6.6 0 0 1-.85 0l-2.0-2.0-.72 2.2c-.15.45-.78.470-.95.020l-2.350-6.2a.75.75 0 0 1 .97-.97Z"/></svg>
<span class="t" style="top:785.6px;font-size:33px;line-height:33px;color:#303030;-webkit-text-stroke:0.85px currentColor;letter-spacing:1.39px;left:2517.0px;">Marketing</span>
<svg class="ic" viewBox="0 0 20 20" width="46.6" height="46.6" style="left:2447.7px;top:849.2px;color:#4a4a4a;" fill="#4a4a4a"><circle cx="10" cy="10" r="6.500"/><circle cx="10.00" cy="4.00" r="2.150"/><circle cx="14.24" cy="5.76" r="2.150"/><circle cx="16.00" cy="10.00" r="2.150"/><circle cx="14.24" cy="14.24" r="2.150"/><circle cx="10.00" cy="16.00" r="2.150"/><circle cx="5.76" cy="14.24" r="2.150"/><circle cx="4.00" cy="10.00" r="2.150"/><circle cx="5.76" cy="5.76" r="2.150"/><path d="M7.300 12.700l5.400-5.400" stroke="#ebebeb" stroke-width="1.600" stroke-linecap="round"/><circle cx="7.500" cy="7.600" r="1.150" fill="#ebebeb"/><circle cx="12.500" cy="12.400" r="1.150" fill="#ebebeb"/></svg>
<span class="t" style="top:855.6px;font-size:33px;line-height:33px;color:#303030;-webkit-text-stroke:0.85px currentColor;letter-spacing:1.14px;left:2517.0px;">Discounts</span>
<svg class="ic" viewBox="0 0 20 20" width="46.6" height="46.6" style="left:2447.7px;top:919.2px;color:#4a4a4a;" fill="#4a4a4a"><path fill-rule="evenodd" d="M3 6.500a3 3 0 0 1 3-3h8a3 3 0 0 1 3 3v4.500a3 3 0 0 1-3 3h-8a3 3 0 0 1-3-3v-4.5Zm3-1.500a1.5 1.5 0 0 0-1.5 1.5v3.2l2.100-1.900a1.400 1.400 0 0 1 1.900 0l1.700 1.600 1.000-.8a1.400 1.400 0 0 1 1.800 0l2.500 2.100v-4.200a1.5 1.5 0 0 0-1.5-1.5h-8Zm6.700 2.700a1 1 0 1 0 0-2 1 1 0 0 0 0 2Z"/><rect x="3.200" y="15.400" width="8" height="1.600" rx=".8"/><rect x="12.600" y="15.400" width="4.200" height="1.600" rx=".8"/></svg>
<span class="t" style="top:925.6px;font-size:33px;line-height:33px;color:#303030;-webkit-text-stroke:0.85px currentColor;letter-spacing:1.20px;left:2517.0px;">Content</span>
<svg class="ic" viewBox="0 0 20 20" width="46.6" height="46.6" style="left:2447.7px;top:989.2px;color:#4a4a4a;" fill="#4a4a4a"><path d="M9.600 2.800a7.200 7.200 0 1 0 1.200 14.300v-1.600a2.900 2.900 0 0 1 .5-5.200c.2-1.400 1.300-2.500 2.800-2.700l2.400-.300A7.200 7.200 0 0 0 9.600 2.800Z"/><path fill="#ebebeb" d="M9.100 4.300c1.100-.3 2.600.1 2.900.9.300.8-.8 1.200-1.500 1.700-.7.5-.5 1.500-1.300 1.800-.8.3-1.200-.400-1.900-.2-.7.2-.7 1.100-1.400 1.300-.7.2-1.600-.3-1.700-1.100-.1-.9.500-2.200 1.600-3.100 1.000-.800 2.200-1.100 3.300-1.300Z"/><path fill="#ebebeb" d="M8.300 11.400c.8-.2 1.700.2 2.000 1.000.3.800-.1 1.500-.1 2.300 0 .7-.2 1.300-.9 1.300s-1.100-.6-1.400-1.300c-.3-.700-1.100-1.100-1.000-1.900.1-.8.600-1.200 1.400-1.400Z"/><path fill="none" stroke="currentColor" stroke-width="1.400" stroke-linecap="round" d="M16.900 10.700c-.4-.5-1.000-.8-1.800-.8-1.100 0-1.900.600-1.900 1.500 0 2.000 3.900.9 3.900 2.900 0 .9-.8 1.500-2.000 1.500-.900 0-1.600-.3-2.000-.9M15.100 8.900v8.400"/></svg>
<span class="t" style="top:995.6px;font-size:33px;line-height:33px;color:#303030;-webkit-text-stroke:0.85px currentColor;letter-spacing:1.32px;left:2517.0px;">Markets</span>
<svg class="ic" viewBox="0 0 20 20" width="46.6" height="46.6" style="left:2447.7px;top:1059.2px;color:#4a4a4a;" fill="#4a4a4a"><rect x="3.500" y="10" width="3.400" height="6.650" rx="1.300"/><rect x="8.250" y="4.150" width="3.400" height="12.500" rx="1.300"/><rect x="13.000" y="6.800" width="3.400" height="9.850" rx="1.300"/></svg>
<span class="t" style="top:1065.6px;font-size:33px;line-height:33px;color:#303030;-webkit-text-stroke:0.85px currentColor;letter-spacing:1.49px;left:2517.0px;">Analytics</span>
<span class="t" style="top:1167.9px;font-size:30.3px;line-height:30.3px;color:#616161;-webkit-text-stroke:0.85px currentColor;letter-spacing:0.88px;left:2446.4px;">Sales channels</span>
<svg class="ic" viewBox="0 0 20 20" width="52" height="52" style="left:2893.5px;top:1162.0px;color:#8a8a8a;" fill="#8a8a8a"><path fill-rule="evenodd" d="M7.720 14.530a.75.75 0 0 1 0-1.060l3.470-3.470-3.470-3.470a.75.75 0 0 1 1.060-1.060l4 4a.75.75 0 0 1 0 1.060l-4 4a.75.75 0 0 1-1.060 0Z"/></svg>
<div class="appic" style="left:2451.0px;top:1233.0px"><svg viewBox="0 0 40 40" width="40" height="40"><g fill="none" stroke="#f4f4f4" stroke-width="2.9" stroke-linejoin="round" stroke-linecap="round"><path d="M9.300 20.500v10.200a2.300 2.300 0 0 0 2.300 2.300h16.800a2.300 2.300 0 0 0 2.300-2.300v-10.200"/><path d="M9.800 7.300h20.400a1.500 1.500 0 0 1 1.450 1.100l1.650 6.900a3.800 3.800 0 0 1-7.500.900 3.800 3.800 0 0 1-7.500 0 3.800 3.800 0 0 1-7.500-.900l1.650-6.900a1.500 1.500 0 0 1 1.350-1.100Z"/><path d="M8.300 13.200h23.400" stroke-width="2.400"/><path d="M15.900 32.500v-5.500a4.100 4.100 0 0 1 8.200 0v5.500" fill="#f4f4f4" stroke-width="2.200"/><path d="M18.600 32.500v-4.800a1.400 1.400 0 0 1 2.800 0v4.800" fill="#5a5a5a" stroke="none"/></g></svg></div>
<span class="t" style="top:1236.6px;font-size:33px;line-height:33px;color:#303030;-webkit-text-stroke:0.85px currentColor;letter-spacing:0.54px;left:2517.0px;">Online Store</span>
<span class="t" style="top:1347.9px;font-size:30.3px;line-height:30.3px;color:#616161;-webkit-text-stroke:0.85px currentColor;letter-spacing:1.78px;left:2446.4px;">Apps</span>
<svg class="ic" viewBox="0 0 20 20" width="52" height="52" style="left:2893.5px;top:1342.0px;color:#8a8a8a;" fill="#8a8a8a"><path fill-rule="evenodd" d="M7.720 14.530a.75.75 0 0 1 0-1.060l3.470-3.470-3.470-3.470a.75.75 0 0 1 1.060-1.060l4 4a.75.75 0 0 1 0 1.060l-4 4a.75.75 0 0 1-1.060 0Z"/></svg>
<svg class="ic" viewBox="0 0 20 20" width="46.6" height="46.6" style="left:2447.7px;top:2242.7px;color:#4a4a4a;" fill="#4a4a4a"><rect x="8.050" y="2.600" width="3.900" height="5" rx="1.300" transform="rotate(0 10 10)"/><rect x="8.050" y="2.600" width="3.900" height="5" rx="1.300" transform="rotate(60 10 10)"/><rect x="8.050" y="2.600" width="3.900" height="5" rx="1.300" transform="rotate(120 10 10)"/><rect x="8.050" y="2.600" width="3.900" height="5" rx="1.300" transform="rotate(180 10 10)"/><rect x="8.050" y="2.600" width="3.900" height="5" rx="1.300" transform="rotate(240 10 10)"/><rect x="8.050" y="2.600" width="3.900" height="5" rx="1.300" transform="rotate(300 10 10)"/><circle cx="10" cy="10" r="5.300"/><circle cx="10" cy="10" r="1.750" fill="#ebebeb"/></svg>
<span class="t" style="top:2249.6px;font-size:33px;line-height:33px;color:#303030;-webkit-text-stroke:0.85px currentColor;letter-spacing:1.01px;left:2517.0px;">Settings</span>
<div style="left:4863.0px;top:462.0px;width:7.6px;height:595.0px;background:#b5b5b5;border-radius:4px;"></div>
<div style="left:2396.0px;top:0.0px;width:2482.0px;height:88.0px;background:#1a1a1a;"></div>
<svg class="ic" viewBox="0 0 52 58" width="52" height="58" style="left:2448.0px;top:-12.0px"><defs><linearGradient id="bg1" x1="0.150" y1="0.100" x2="0.850" y2="1"><stop offset="0" stop-color="#e860cf"/><stop offset=".450" stop-color="#a541d8"/><stop offset="1" stop-color="#5a2bd0"/></linearGradient><linearGradient id="bg2" x1="0" y1="0" x2="1" y2="1"><stop offset="0" stop-color="#9a3ccb"/><stop offset="1" stop-color="#4b22b8"/></linearGradient></defs><path d="M15.500 12.500c.8-6 4.200-10.500 8-10.500 2.500 0 4.200 2.300 5 5.500M19.500 12c.7-4.500 2.700-8 5.200-8.800" fill="none" stroke="#e062d2" stroke-width="1.700" stroke-linecap="round"/><path d="M5.500 15.500l31-5.500 1.500 46.500-38 -5.500Z" fill="url(#bg1)"/><path d="M36.500 10l6.500 2.500 9 40.500-14 3.500Z" fill="url(#bg2)"/><path d="M26.800 21.800c-1.700-1.000-3.700-1.600-5.700-1.500-4.900.200-8.200 3.200-8 7.300.300 5.200 6.800 5.800 6.900 9 .050 1.100-.750 1.900-2.100 1.950-2.100.100-4.400-1.500-4.400-1.500l-1.300 4.900s2.400 2.300 6.500 2.200c4.800-.150 8-3.100 7.800-7.700-.300-5.800-7.100-6.500-7.200-9.200-.050-1.300 1.000-1.900 2.400-1.950 1.900-.050 3.700.800 3.700.800l1.400-4.300Z" fill="#fff"/></svg>
<svg class="ic" width="170" height="70" style="left:2504.0px;top:-14.0px;overflow:visible"><text x="3" y="48.3" font-family="Liberation Sans, sans-serif" font-weight="700" font-style="italic" font-size="52" textLength="153" lengthAdjust="spacingAndGlyphs" fill="#fff" stroke="#fff" stroke-width="1.2">shopify</text></svg>
<div style="left:2682.0px;top:-5.0px;width:184.0px;height:47.5px;border-radius:24px;border:2px solid #5e5e5e;box-sizing:border-box;"></div>
<span class="t" style="top:6.2px;font-size:28px;line-height:28px;color:#e8e8e8;font-style:italic;letter-spacing:0.45px;left:2699.0px;">Summer ’25</span>
<div class="srch" style="left:2996.6px;top:-27.0px;width:1143.1px;height:89.0px;"></div>
<svg class="ic" viewBox="0 0 20 20" width="50" height="50" style="left:3018.5px;top:-7.0px;color:#b5b5b5;" fill="#b5b5b5"><path fill-rule="evenodd" d="M12.323 13.383a5.500 5.500 0 1 1 1.060-1.060l2.897 2.897a.75.75 0 1 1-1.060 1.060l-2.897-2.897Zm.677-4.383a4 4 0 1 1-8 0 4 4 0 0 1 8 0Z"/></svg>
<span class="t" style="top:2.5px;font-size:32.5px;line-height:32.5px;color:#b5b5b5;letter-spacing:0.70px;left:3077.0px;">Search</span>
<div style="left:4006.0px;top:-7.0px;width:49.5px;height:49.5px;background:#444444;border-radius:10px;"></div>
<svg class="ic" viewBox="0 0 20 20" width="33" height="33" style="left:4014.3px;top:1.3px" fill="none" stroke="#b5b5b5" stroke-width="1.6"><path d="M7.500 7.500h5v5h-5zM7.500 7.500h-1.400a1.700 1.700 0 1 1 1.700-1.700l-.3 1.700ZM12.500 7.500v-1.700a1.700 1.700 0 1 1 1.700 1.700h-1.700ZM12.500 12.500h1.700a1.700 1.700 0 1 1-1.700 1.700v-1.700ZM7.500 12.500v1.700a1.700 1.700 0 1 1-1.700-1.700h1.700Z" stroke-linejoin="round"/></svg>
<div style="left:4066.0px;top:-7.0px;width:49.5px;height:49.5px;background:#444444;border-radius:10px;"></div>
<span class="t" style="top:3.0px;font-size:31px;line-height:31px;color:#b5b5b5;-webkit-text-stroke:0.85px currentColor;left:4080.4px;">K</span>
<div class="srch" style="left:4156.4px;top:-27.0px;width:89.4px;height:89.0px;"></div>
<svg class="ic" viewBox="0 0 20 20" width="50" height="50" style="left:4176.0px;top:-7.0px;color:#fff;" fill="#fff"><path fill="none" stroke="currentColor" stroke-width="1.550" stroke-linejoin="round" d="M3.250 10c1.300-3.100 3.800-5.150 6.750-5.150s5.450 2.050 6.750 5.150c-1.300 3.100-3.800 5.150-6.750 5.150s-5.450-2.050-6.750-5.150Z"/><circle cx="10" cy="10" r="2.250" fill="none" stroke="currentColor" stroke-width="1.550"/></svg>
<svg class="ic" viewBox="0 0 40 40" width="40" height="40" style="left:4311px;top:-1px;overflow:visible"><path d="M20 -2c9.500 0 18.500 2.500 18.500 13v13.500c0 8.500-6.500 13.500-18.500 13.500s-18.500-5-18.500-13.500v-13.500c0-10.500 9-13 18.500-13Z" fill="#e3e3e3"/><path d="M4.500 16.500l3.300-8 2.700 3.600 3.700-5.200 3 4.100c6.800-3.400 14.800-2.200 18.600 4.200-5.200-1.800-10.800-1.300-15.600.9-5.200-1.700-10.400-1.700-15.700.4Z" fill="#1a1a1a"/><circle cx="9.700" cy="21.600" r="3.100" fill="#1a1a1a"/><circle cx="30.300" cy="21.600" r="3.100" fill="#1a1a1a"/><path d="M4.800 28.300c3.600-2.800 8.200-3.400 12-1.700 1.400-2.300 5-2.300 6.400 0 3.800-1.700 8.400-1.100 12 1.700-2 5-7.800 7.400-15.200 7.400s-13.200-2.400-15.200-7.400Z" fill="#1a1a1a"/><path d="M15.200 29.300c1.400 3.300 8.200 3.300 9.600 0-3 1.200-6.600 1.200-9.600 0Z" fill="#e3e3e3"/></svg>
<svg class="ic" viewBox="0 0 20 20" width="50" height="50" style="left:4415.0px;top:-7.0px;color:#e3e3e3;" fill="#e3e3e3"><path fill="none" stroke="currentColor" stroke-width="1.600" stroke-linejoin="round" stroke-linecap="round" d="M10 3.500c-2.500 0-4.300 1.900-4.300 4.300v2.200c0 .8-.3 1.500-.9 2.100l-.5.500c-.5.500-.15 1.400.6 1.400h10.200c.75 0 1.100-.9.6-1.400l-.5-.5c-.6-.6-.9-1.300-.9-2.100v-2.200c0-2.400-1.800-4.300-4.300-4.300Z"/><path fill="none" stroke="currentColor" stroke-width="1.600" stroke-linecap="round" d="M8.100 15.700c.3.800 1.000 1.300 1.900 1.300s1.600-.5 1.900-1.300"/></svg>
<div style="left:4446.0px;top:-14.0px;width:28.0px;height:29.0px;background:#e0283c;border-radius:14px;"></div>
<span class="t" style="top:-8.9px;font-size:20px;line-height:20px;color:#fff;font-weight:700;left:4455.4px;">2</span>
<div style="left:4516.0px;top:-20.0px;width:70.0px;height:72.5px;background:#4fc0fe;border-radius:18px;"></div>
<span class="t" style="top:7.9px;font-size:21.5px;line-height:21.5px;color:#0b2c4a;left:4531.9px;">Sap</span>
<span class="t" style="top:2.8px;font-size:33px;line-height:33px;color:#e3e3e3;-webkit-text-stroke:0.85px currentColor;letter-spacing:-0.51px;left:4597.0px;">Sunset and plant</span>
</div></div>
<div style="left:1760.2px;top:1550.6px;width:227.3px;height:578.3px;border:10.5px solid #fb5a4d;box-sizing:border-box;box-shadow:0 5px 6px rgba(0,0,0,.55), inset 0 5px 6px -1px rgba(0,0,0,.55);"></div>
<div style="left:4322.0px;top:1572.5px;width:245.6px;height:555.3px;border:10.5px solid #fb5a4d;box-sizing:border-box;box-shadow:0 5px 6px rgba(0,0,0,.55), inset 0 5px 6px -1px rgba(0,0,0,.55);"></div>
<svg class="ic" width="393" height="120" style="left:1082.0px;top:231.5px;overflow:visible"><defs><filter id="sh1124" x="-10%" y="-40%" width="120%" height="190%"><feDropShadow dx="0" dy="5" stdDeviation="3" flood-color="#000" flood-opacity=".75"/></filter></defs><g filter="url(#sh1124)"><text x="40" y="70" font-family="Liberation Sans, sans-serif" font-weight="700" font-size="57" letter-spacing="-1.5" textLength="315.7" lengthAdjust="spacingAndGlyphs" stroke="#fff" stroke-width="13" stroke-linejoin="round" fill="#fff">source store</text></g><text x="40" y="70" font-family="Liberation Sans, sans-serif" font-weight="700" font-size="57" letter-spacing="-1.5" textLength="315.7" lengthAdjust="spacingAndGlyphs" fill="#fb5a4d">source store</text></svg>
<svg class="ic" width="498" height="120" style="left:3741.5px;top:157.6px;overflow:visible"><defs><filter id="sh3783" x="-10%" y="-40%" width="120%" height="190%"><feDropShadow dx="0" dy="5" stdDeviation="3" flood-color="#000" flood-opacity=".75"/></filter></defs><g filter="url(#sh3783)"><text x="40" y="70" font-family="Liberation Sans, sans-serif" font-weight="700" font-size="54.5" letter-spacing="-1.5" textLength="421.5" lengthAdjust="spacingAndGlyphs" stroke="#fff" stroke-width="13" stroke-linejoin="round" fill="#fff">destination store</text></g><text x="40" y="70" font-family="Liberation Sans, sans-serif" font-weight="700" font-size="54.5" letter-spacing="-1.5" textLength="421.5" lengthAdjust="spacingAndGlyphs" fill="#fb5a4d">destination store</text></svg>
<svg class="ic" viewBox="0 0 24 38" width="27" height="42.750" style="left:2019.2px;top:681.500px;overflow:visible;filter:drop-shadow(0 2px 2px rgba(0,0,0,.35))"><path d="M2.500 2.500v25.500l6.300-5.800 4.800 11.300 4.600-2-4.800-11h8.300Z" fill="#111" stroke="#fff" stroke-width="2.200" stroke-linejoin="round"/></svg></div></body></html>
